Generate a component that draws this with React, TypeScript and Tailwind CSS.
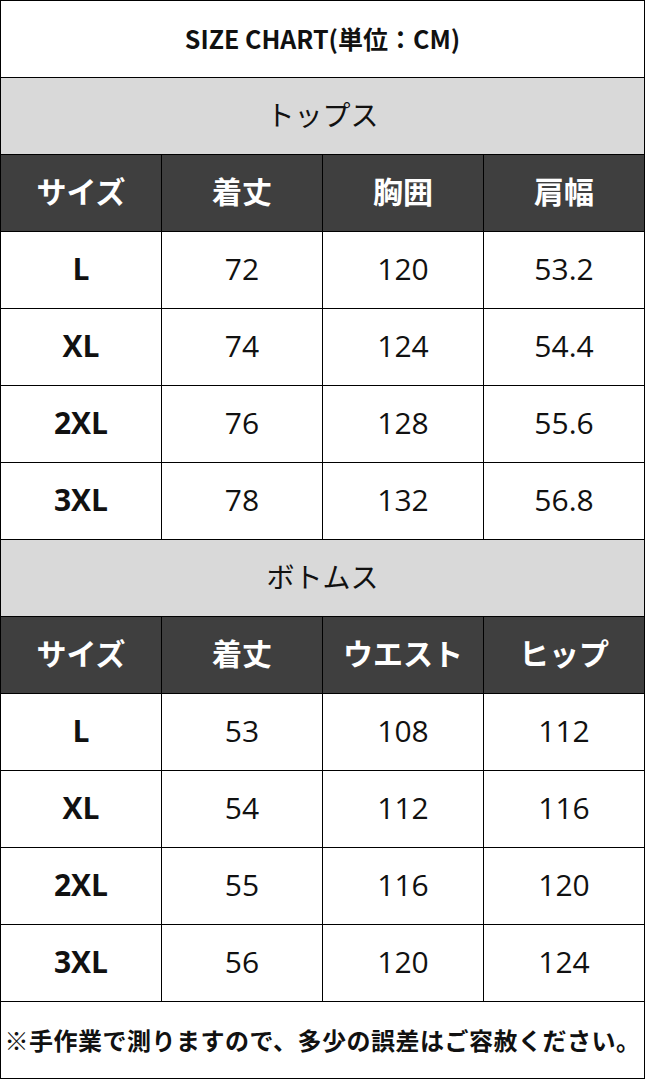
const JP = "font-['Noto_Sans_CJK_JP',sans-serif]"

type Section = {
  title: string
  heads: string[]
  rows: string[][]
}

const sections: Section[] = [
  {
    title: 'トップス',
    heads: ['サイズ', '着丈', '胸囲', '肩幅'],
    rows: [
      ['L', '72', '120', '53.2'],
      ['XL', '74', '124', '54.4'],
      ['2XL', '76', '128', '55.6'],
      ['3XL', '78', '132', '56.8'],
    ],
  },
  {
    title: 'ボトムス',
    heads: ['サイズ', '着丈', 'ウエスト', 'ヒップ'],
    rows: [
      ['L', '53', '108', '112'],
      ['XL', '54', '112', '116'],
      ['2XL', '55', '116', '120'],
      ['3XL', '56', '120', '124'],
    ],
  },
]

function Row({ children, className = '' }: { children: React.ReactNode; className?: string }) {
  return <div className={`flex h-[77px] border-b border-black ${className}`}>{children}</div>
}

export default function App() {
  return (
    <div className="w-[646px] bg-white text-[#111]">
      <div className="w-[645px] border-l border-t border-black">
        <Row className="items-center justify-center border-r">
          <span className={`${JP} text-[25px] font-bold`}>SIZE CHART(単位：CM)</span>
        </Row>

        {sections.map((s) => (
          <div key={s.title}>
            <Row className="items-center justify-center border-r bg-[#d9d9d9] pb-[4px]">
              <span className={`${JP} text-[28px] font-normal`}>{s.title}</span>
            </Row>
            <Row className="bg-[#3f3f3f]">
              {s.heads.map((h) => (
                <div
                  key={h}
                  className={`flex w-[161px] items-center justify-center border-r border-black pb-[6px] ${JP} text-[30px] font-bold text-white`}
                >
                  {h}
                </div>
              ))}
            </Row>
            {s.rows.map((r) => (
              <Row key={r[0]}>
                {r.map((v, i) => (
                  <div
                    key={i}
                    className={`flex w-[161px] items-center justify-center border-r border-black pb-[4px] font-['Open_Sans',sans-serif] text-[30px] ${
                      i === 0 ? 'font-bold' : 'font-normal'
                    }`}
                  >
                    {v}
                  </div>
                ))}
              </Row>
            ))}
          </div>
        ))}

        <Row className="items-center justify-center border-r">
          <span className={`${JP} whitespace-nowrap text-[24px] font-bold tracking-[0.5px]`}>
            ※手作業で測りますので、多少の誤差はご容赦ください。
          </span>
        </Row>
      </div>
    </div>
  )
}
